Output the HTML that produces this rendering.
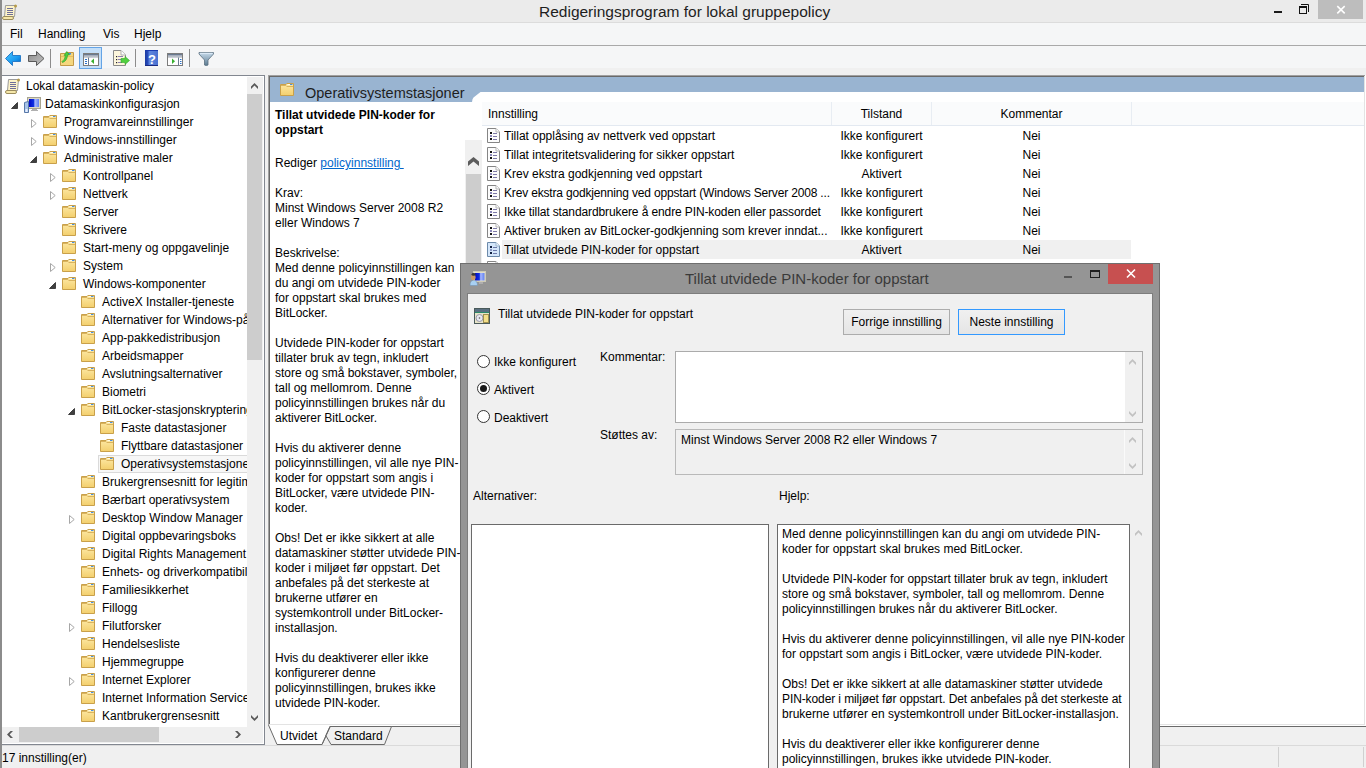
<!DOCTYPE html><html><head><meta charset="utf-8"><style>
html,body{margin:0;padding:0;width:1366px;height:768px;overflow:hidden;background:#f0f0f0;font-family:"Liberation Sans", sans-serif;font-size:12px;}
.t{position:absolute;white-space:nowrap;}
.b{position:absolute;box-sizing:border-box;}
svg.i{position:absolute;overflow:visible;}
</style></head><body>
<svg width="0" height="0" style="position:absolute">
<defs>
<linearGradient id="fg" x1="0" y1="0" x2="0" y2="1"><stop offset="0" stop-color="#fde9a6"/><stop offset="1" stop-color="#f3cf6d"/></linearGradient>
<symbol id="folder" viewBox="0 0 14 13">
<path d="M0.5 1.5 H6 L6.8 0.5 H13.5 V12.5 H0.5 Z" fill="url(#fg)" stroke="#c9a04a" stroke-width="1"/>
<path d="M7.5 1.5 H12.5" stroke="#fffbe8" stroke-width="1"/>
<rect x="10" y="1" width="2.5" height="1" fill="#4a90e0"/>
<path d="M1 2.5 H5.8 L6.8 3.5 H13" stroke="#d9b35e" stroke-width="1" fill="none"/>
</symbol>
<symbol id="scroll" viewBox="0 0 15 16">
<path d="M3.5 1.5 H13.5 L12.5 12.5 H2.5 Z" fill="#fdf3c8" stroke="#9c9c9c" stroke-width="1"/>
<path d="M5 4.5h6M5 6.5h6M5 8.5h6M5 10.5h6" stroke="#6e6e9a" stroke-width="1"/>
<rect x="0.5" y="12.5" width="11" height="3" rx="1.5" fill="#f5e7a9" stroke="#9c8c5c" stroke-width="1"/>
<circle cx="13.5" cy="2" r="1.5" fill="#b59a4a"/>
</symbol>
<symbol id="doc" viewBox="0 0 13 15">
<path d="M0.5 0.5 H9 L12.5 4 V14.5 H0.5 Z" fill="#fcfcfc" stroke="#858585" stroke-width="1"/>
<path d="M9 0.5 V4 H12.5" fill="#fff" stroke="#b5b5b5" stroke-width="1"/>
<rect x="3" y="4" width="2" height="2" fill="#111"/><rect x="3" y="7" width="2" height="2" fill="#8a86b8"/><rect x="3" y="10" width="2" height="2" fill="#111"/>
<path d="M6 5.5h4M6 8.5h4M6 11.5h4" stroke="#7c78a8" stroke-width="1"/>
</symbol>
<symbol id="docsel" viewBox="0 0 13 15">
<path d="M0.5 0.5 H9 L12.5 4 V14.5 H0.5 Z" fill="#d4e6fa" stroke="#6c8aaa" stroke-width="1"/>
<path d="M9 0.5 V4 H12.5" fill="#eef6ff" stroke="#9ab4cc" stroke-width="1"/>
<rect x="3" y="4" width="2" height="2" fill="#102040"/><rect x="3" y="7" width="2" height="2" fill="#8a96c0"/><rect x="3" y="10" width="2" height="2" fill="#102040"/>
<path d="M6 5.5h4M6 8.5h4M6 11.5h4" stroke="#6a78a8" stroke-width="1"/>
</symbol>
<symbol id="arrowc" viewBox="0 0 6 9">
<path d="M0.5 0.5 L5.2 4.5 L0.5 8.5 Z" fill="#fff" stroke="#a6a6a6" stroke-width="1"/>
</symbol>
<symbol id="arrowe" viewBox="0 0 7 7">
<path d="M6.5 0.5 V6.5 H0.5 Z" fill="#404040" stroke="#404040" stroke-width="1"/>
</symbol>
<linearGradient id="scr" x1="0" y1="0" x2="1" y2="0"><stop offset="0" stop-color="#0008c8"/><stop offset="0.45" stop-color="#1030e0"/><stop offset="0.6" stop-color="#a8b8ff"/><stop offset="1" stop-color="#6080f0"/></linearGradient>
<symbol id="computer" viewBox="0 0 17 16">
<rect x="3.5" y="0.5" width="13" height="11" fill="#dcd8c4" stroke="#a8a490"/>
<rect x="5" y="2" width="10" height="8" fill="url(#scr)"/>
<path d="M8 12.5h5M7 13.5h7" stroke="#b0b0b0"/>
<path d="M0.5 5.5 L4.5 4.5 V15.5 H0.5 Z" fill="#a8c4e8" stroke="#5878a8"/>
<rect x="1.5" y="12" width="2" height="3" fill="#e8f0ff"/>
</symbol>
<symbol id="person" viewBox="0 0 20 20">
<rect x="7.5" y="5.5" width="12" height="10" fill="#e2dfcc" stroke="#cfcbb5"/>
<rect x="9" y="7" width="9.5" height="7.5" fill="url(#scr)"/>
<rect x="13" y="16.5" width="4" height="1" fill="#c8c8c8"/>
<path d="M4 19.5 Q4 14.5 7.5 14.2 Q11.5 14.5 11.5 19.5 Z" fill="#a8d0f2" stroke="#7090b0" stroke-width="0.5"/>
<ellipse cx="7.3" cy="11.2" rx="2.3" ry="3" fill="#c99a68"/>
<ellipse cx="7.6" cy="8.4" rx="2.1" ry="1.3" fill="#3a3a3a"/>
</symbol>
</defs></svg>

<div class="b" style="left:0px;top:0px;width:2px;height:768px;background:#8c8c8c"></div>
<div class="b" style="left:2px;top:0px;width:1364px;height:22px;background:#ebebeb"></div>
<div class="b" style="left:2px;top:22px;width:1364px;height:1px;background:#dcdcdc"></div>
<svg class="i" style="left:2px;top:4px" width="15" height="16"><use href="#scroll"/></svg>
<div class="t" style="left:539px;top:1.5px;font-size:15.5px;line-height:20px;color:#1e1e1e;font-weight:normal;">Redigeringsprogram for lokal gruppepolicy</div>
<div class="b" style="left:1274px;top:11px;width:8px;height:2px;background:#1a1a1a"></div>
<svg class="i" style="left:1298px;top:3px" width="13" height="13"><path d="M3 1.5 H10.5 V9" fill="none" stroke="#141414"/><rect x="1.5" y="3.5" width="7" height="7" fill="none" stroke="#141414"/><rect x="1" y="3" width="8" height="2" fill="#141414"/></svg>
<div class="b" style="left:1318px;top:0px;width:45px;height:19px;background:#bdbdbd"></div>
<svg class="i" style="left:1336px;top:5px" width="10" height="9"><path d="M1.3 1.2 L8.7 8.3 M8.7 1.2 L1.3 8.3" stroke="#fff" stroke-width="1.6"/></svg>
<div class="b" style="left:2px;top:23px;width:1364px;height:22px;background:#f5f6f7"></div>
<div class="t" style="left:10px;top:25px;font-size:12px;line-height:18px;color:#000;font-weight:normal;">Fil</div>
<div class="t" style="left:38px;top:25px;font-size:12px;line-height:18px;color:#000;font-weight:normal;">Handling</div>
<div class="t" style="left:103px;top:25px;font-size:12px;line-height:18px;color:#000;font-weight:normal;">Vis</div>
<div class="t" style="left:134px;top:25px;font-size:12px;line-height:18px;color:#000;font-weight:normal;">Hjelp</div>
<div class="b" style="left:2px;top:45px;width:1364px;height:1px;background:#a9a9a9"></div>
<div class="b" style="left:2px;top:46px;width:1364px;height:22px;background:#f5f6f7"></div>
<div class="b" style="left:2px;top:68px;width:1364px;height:7px;background:#f0f0f0"></div>
<svg class="i" style="left:2px;top:46px" width="220" height="22">
<defs>
<linearGradient id="bluearr" x1="0" y1="0" x2="1" y2="1"><stop offset="0" stop-color="#4cc8ff"/><stop offset="0.6" stop-color="#1a9af0"/><stop offset="1" stop-color="#0060c0"/></linearGradient>
<linearGradient id="grayarr" x1="0" y1="0" x2="1" y2="1"><stop offset="0" stop-color="#8a8a8a"/><stop offset="0.5" stop-color="#a8a8a8"/><stop offset="1" stop-color="#c0c0c0"/></linearGradient>
<linearGradient id="book" x1="0" y1="0" x2="1" y2="0"><stop offset="0" stop-color="#1a3aa0"/><stop offset="0.25" stop-color="#2a50c0"/><stop offset="0.3" stop-color="#6088e0"/><stop offset="1" stop-color="#4a70d0"/></linearGradient>
<linearGradient id="funnel" x1="0" y1="0" x2="0" y2="1"><stop offset="0" stop-color="#c8dcec"/><stop offset="1" stop-color="#5a7a90"/></linearGradient>
</defs>
<!-- back arrow -->
<path d="M3.5 12.5 L10.5 5.5 V9.5 H18.5 V15.5 H10.5 V19.5 Z" fill="url(#bluearr)" stroke="#2a7cc8" stroke-width="1" stroke-linejoin="round"/>
<!-- forward arrow -->
<path d="M42 12.5 L34.5 5.5 V9.5 H26.5 V15.5 H34.5 V19.5 Z" fill="url(#grayarr)" stroke="#5a5a5a" stroke-width="1" stroke-linejoin="round"/>
<rect x="48" y="3" width="1" height="19" fill="#8c8c8c"/>
<!-- up folder -->
<path d="M58.5 7.5 H63 L64 6.5 H71.5 V19.5 H58.5 Z" fill="#f5d77e" stroke="#c49a48"/>
<path d="M59 10.5 H71" stroke="#e8c060"/>
<rect x="66" y="7" width="3" height="1.5" fill="#3c8ee8"/>
<path d="M60 15.5 Q63 14 63.5 9 L62 9.5 L64.8 5.5 L67.5 9 L65.6 9 Q65 15 60.5 16.5 Z" fill="#4cd040" stroke="#2a9a20" stroke-width="0.6"/>
<!-- highlighted button -->
<rect x="77.5" y="1.5" width="22" height="21" fill="#c4dff8" stroke="#64a4e6"/>
<rect x="81.5" y="7.5" width="15" height="12" fill="#fff" stroke="#7c7c7c"/>
<rect x="82" y="8" width="14" height="1.6" fill="#6a7a90"/>
<rect x="82" y="10.3" width="14" height="1.2" fill="#9aa2b0"/>
<rect x="86" y="11.5" width="1" height="8" fill="#6a7a90"/>
<path d="M83 13.5h2M83 15.5h2M83 17.5h2" stroke="#2a70c8"/>
<path d="M92 12.5 V18 L89 15.25 Z" fill="#38b030"/>
<!-- export list -->
<path d="M111.5 4.5 H119 L123.5 9 V19.5 H111.5 Z" fill="#fdf6dc" stroke="#8a8a8a"/>
<path d="M119 4.5 V9 H123.5" fill="#fff" stroke="#b0b0b0"/>
<rect x="114" y="10" width="1.2" height="1.2" fill="#222"/><rect x="114" y="13" width="1.2" height="1.2" fill="#222"/><rect x="114" y="16" width="1.2" height="1.2" fill="#222"/>
<path d="M116 10.5h5M116 13.5h4M116 16.5h4" stroke="#8a80b0"/>
<path d="M119 12.5 H123 V10.5 L127.5 14.5 L123 18.5 V16.5 H119 Z" fill="#50d040" stroke="#34a828" stroke-width="0.6"/>
<rect x="133" y="3" width="1" height="18" fill="#8c8c8c"/>
<!-- help book -->
<rect x="143" y="4" width="13" height="16" fill="url(#book)"/>
<rect x="143" y="4" width="13" height="1" fill="#1a3ab0"/><rect x="143" y="19" width="13" height="1" fill="#1a2a80"/>
<text x="150" y="17.5" font-family="Liberation Sans" font-size="13" font-weight="bold" fill="#fff" text-anchor="middle">?</text>
<!-- action pane window -->
<rect x="165.5" y="7.5" width="15" height="12" fill="#fff" stroke="#7c7c7c"/>
<rect x="166" y="8" width="14" height="1.6" fill="#6a7a90"/>
<rect x="166" y="10.3" width="14" height="1.2" fill="#9aa2b0"/>
<rect x="176" y="11.5" width="1" height="8" fill="#6a7a90"/>
<path d="M178 13.5h1.5M178 15.5h1.5M178 17.5h1.5" stroke="#2a70c8"/>
<path d="M170 12.5 V18 L173 15.25 Z" fill="#38b030"/>
<rect x="187" y="3" width="1" height="18" fill="#8c8c8c"/>
<!-- funnel -->
<path d="M197 6.5 H211.5 V8 L206 14 V19 Q204.2 20 202.5 19 V14 L197 8 Z" fill="url(#funnel)" stroke="#5a7080" stroke-width="0.8"/>
<path d="M198 7.3 H210.5" stroke="#e8f4ff" stroke-width="0.8"/>
</svg>
<div class="b" style="left:2px;top:75px;width:263px;height:670px;background:#fff;border:1px solid #828790;border-left:0"></div>
<div class="b" style="left:2px;top:76px;width:245px;height:650px;overflow:hidden">
<svg class="i" style="left:3px;top:2px" width="15" height="16"><use href="#scroll"/></svg>
<div class="t" style="left:24px;top:1px;font-size:12px;line-height:18px;color:#000;font-weight:normal;">Lokal datamaskin-policy</div>
<svg class="i" style="left:22px;top:21px" width="17" height="16"><use href="#computer"/></svg>
<svg class="i" style="left:9px;top:26px" width="7" height="7"><use href="#arrowe"/></svg>
<div class="t" style="left:43px;top:19px;font-size:12px;line-height:18px;color:#000;font-weight:normal;">Datamaskinkonfigurasjon</div>
<svg class="i" style="left:41px;top:39px" width="14" height="13"><use href="#folder"/></svg>
<svg class="i" style="left:29px;top:43px" width="6" height="9"><use href="#arrowc"/></svg>
<div class="t" style="left:62px;top:37px;font-size:12px;line-height:18px;color:#000;font-weight:normal;">Programvareinnstillinger</div>
<svg class="i" style="left:41px;top:57px" width="14" height="13"><use href="#folder"/></svg>
<svg class="i" style="left:29px;top:61px" width="6" height="9"><use href="#arrowc"/></svg>
<div class="t" style="left:62px;top:55px;font-size:12px;line-height:18px;color:#000;font-weight:normal;">Windows-innstillinger</div>
<svg class="i" style="left:41px;top:75px" width="14" height="13"><use href="#folder"/></svg>
<svg class="i" style="left:28px;top:80px" width="7" height="7"><use href="#arrowe"/></svg>
<div class="t" style="left:62px;top:73px;font-size:12px;line-height:18px;color:#000;font-weight:normal;">Administrative maler</div>
<svg class="i" style="left:60px;top:93px" width="14" height="13"><use href="#folder"/></svg>
<svg class="i" style="left:48px;top:97px" width="6" height="9"><use href="#arrowc"/></svg>
<div class="t" style="left:81px;top:91px;font-size:12px;line-height:18px;color:#000;font-weight:normal;">Kontrollpanel</div>
<svg class="i" style="left:60px;top:111px" width="14" height="13"><use href="#folder"/></svg>
<svg class="i" style="left:48px;top:115px" width="6" height="9"><use href="#arrowc"/></svg>
<div class="t" style="left:81px;top:109px;font-size:12px;line-height:18px;color:#000;font-weight:normal;">Nettverk</div>
<svg class="i" style="left:60px;top:129px" width="14" height="13"><use href="#folder"/></svg>
<div class="t" style="left:81px;top:127px;font-size:12px;line-height:18px;color:#000;font-weight:normal;">Server</div>
<svg class="i" style="left:60px;top:147px" width="14" height="13"><use href="#folder"/></svg>
<div class="t" style="left:81px;top:145px;font-size:12px;line-height:18px;color:#000;font-weight:normal;">Skrivere</div>
<svg class="i" style="left:60px;top:165px" width="14" height="13"><use href="#folder"/></svg>
<div class="t" style="left:81px;top:163px;font-size:12px;line-height:18px;color:#000;font-weight:normal;">Start-meny og oppgavelinje</div>
<svg class="i" style="left:60px;top:183px" width="14" height="13"><use href="#folder"/></svg>
<svg class="i" style="left:48px;top:187px" width="6" height="9"><use href="#arrowc"/></svg>
<div class="t" style="left:81px;top:181px;font-size:12px;line-height:18px;color:#000;font-weight:normal;">System</div>
<svg class="i" style="left:60px;top:201px" width="14" height="13"><use href="#folder"/></svg>
<svg class="i" style="left:47px;top:206px" width="7" height="7"><use href="#arrowe"/></svg>
<div class="t" style="left:81px;top:199px;font-size:12px;line-height:18px;color:#000;font-weight:normal;">Windows-komponenter</div>
<svg class="i" style="left:79px;top:219px" width="14" height="13"><use href="#folder"/></svg>
<div class="t" style="left:100px;top:217px;font-size:12px;line-height:18px;color:#000;font-weight:normal;">ActiveX Installer-tjeneste</div>
<svg class="i" style="left:79px;top:237px" width="14" height="13"><use href="#folder"/></svg>
<div class="t" style="left:100px;top:235px;font-size:12px;line-height:18px;color:#000;font-weight:normal;">Alternativer for Windows-pålogging</div>
<svg class="i" style="left:79px;top:255px" width="14" height="13"><use href="#folder"/></svg>
<div class="t" style="left:100px;top:253px;font-size:12px;line-height:18px;color:#000;font-weight:normal;">App-pakkedistribusjon</div>
<svg class="i" style="left:79px;top:273px" width="14" height="13"><use href="#folder"/></svg>
<div class="t" style="left:100px;top:271px;font-size:12px;line-height:18px;color:#000;font-weight:normal;">Arbeidsmapper</div>
<svg class="i" style="left:79px;top:291px" width="14" height="13"><use href="#folder"/></svg>
<div class="t" style="left:100px;top:289px;font-size:12px;line-height:18px;color:#000;font-weight:normal;">Avslutningsalternativer</div>
<svg class="i" style="left:79px;top:309px" width="14" height="13"><use href="#folder"/></svg>
<div class="t" style="left:100px;top:307px;font-size:12px;line-height:18px;color:#000;font-weight:normal;">Biometri</div>
<svg class="i" style="left:79px;top:327px" width="14" height="13"><use href="#folder"/></svg>
<svg class="i" style="left:66px;top:332px" width="7" height="7"><use href="#arrowe"/></svg>
<div class="t" style="left:100px;top:325px;font-size:12px;line-height:18px;color:#000;font-weight:normal;">BitLocker-stasjonskryptering</div>
<svg class="i" style="left:98px;top:345px" width="14" height="13"><use href="#folder"/></svg>
<div class="t" style="left:119px;top:343px;font-size:12px;line-height:18px;color:#000;font-weight:normal;">Faste datastasjoner</div>
<svg class="i" style="left:98px;top:363px" width="14" height="13"><use href="#folder"/></svg>
<div class="t" style="left:119px;top:361px;font-size:12px;line-height:18px;color:#000;font-weight:normal;">Flyttbare datastasjoner</div>
<div class="b" style="left:96px;top:379px;width:169px;height:18px;border:1px solid #dadada;background:#f7f7f7"></div>
<svg class="i" style="left:98px;top:381px" width="14" height="13"><use href="#folder"/></svg>
<div class="t" style="left:119px;top:379px;font-size:12px;line-height:18px;color:#000;font-weight:normal;">Operativsystemstasjoner</div>
<svg class="i" style="left:79px;top:399px" width="14" height="13"><use href="#folder"/></svg>
<div class="t" style="left:100px;top:397px;font-size:12px;line-height:18px;color:#000;font-weight:normal;">Brukergrensesnitt for legitimasjon</div>
<svg class="i" style="left:79px;top:417px" width="14" height="13"><use href="#folder"/></svg>
<div class="t" style="left:100px;top:415px;font-size:12px;line-height:18px;color:#000;font-weight:normal;">Bærbart operativsystem</div>
<svg class="i" style="left:79px;top:435px" width="14" height="13"><use href="#folder"/></svg>
<svg class="i" style="left:67px;top:439px" width="6" height="9"><use href="#arrowc"/></svg>
<div class="t" style="left:100px;top:433px;font-size:12px;line-height:18px;color:#000;font-weight:normal;">Desktop Window Manager</div>
<svg class="i" style="left:79px;top:453px" width="14" height="13"><use href="#folder"/></svg>
<div class="t" style="left:100px;top:451px;font-size:12px;line-height:18px;color:#000;font-weight:normal;">Digital oppbevaringsboks</div>
<svg class="i" style="left:79px;top:471px" width="14" height="13"><use href="#folder"/></svg>
<div class="t" style="left:100px;top:469px;font-size:12px;line-height:18px;color:#000;font-weight:normal;">Digital Rights Management</div>
<svg class="i" style="left:79px;top:489px" width="14" height="13"><use href="#folder"/></svg>
<div class="t" style="left:100px;top:487px;font-size:12px;line-height:18px;color:#000;font-weight:normal;">Enhets- og driverkompatibilitet</div>
<svg class="i" style="left:79px;top:507px" width="14" height="13"><use href="#folder"/></svg>
<div class="t" style="left:100px;top:505px;font-size:12px;line-height:18px;color:#000;font-weight:normal;">Familiesikkerhet</div>
<svg class="i" style="left:79px;top:525px" width="14" height="13"><use href="#folder"/></svg>
<div class="t" style="left:100px;top:523px;font-size:12px;line-height:18px;color:#000;font-weight:normal;">Fillogg</div>
<svg class="i" style="left:79px;top:543px" width="14" height="13"><use href="#folder"/></svg>
<svg class="i" style="left:67px;top:547px" width="6" height="9"><use href="#arrowc"/></svg>
<div class="t" style="left:100px;top:541px;font-size:12px;line-height:18px;color:#000;font-weight:normal;">Filutforsker</div>
<svg class="i" style="left:79px;top:561px" width="14" height="13"><use href="#folder"/></svg>
<div class="t" style="left:100px;top:559px;font-size:12px;line-height:18px;color:#000;font-weight:normal;">Hendelsesliste</div>
<svg class="i" style="left:79px;top:579px" width="14" height="13"><use href="#folder"/></svg>
<div class="t" style="left:100px;top:577px;font-size:12px;line-height:18px;color:#000;font-weight:normal;">Hjemmegruppe</div>
<svg class="i" style="left:79px;top:597px" width="14" height="13"><use href="#folder"/></svg>
<svg class="i" style="left:67px;top:601px" width="6" height="9"><use href="#arrowc"/></svg>
<div class="t" style="left:100px;top:595px;font-size:12px;line-height:18px;color:#000;font-weight:normal;">Internet Explorer</div>
<svg class="i" style="left:79px;top:615px" width="14" height="13"><use href="#folder"/></svg>
<div class="t" style="left:100px;top:613px;font-size:12px;line-height:18px;color:#000;font-weight:normal;">Internet Information Services</div>
<svg class="i" style="left:79px;top:633px" width="14" height="13"><use href="#folder"/></svg>
<div class="t" style="left:100px;top:631px;font-size:12px;line-height:18px;color:#000;font-weight:normal;">Kantbrukergrensesnitt</div>
</div>
<div class="b" style="left:247px;top:77px;width:16px;height:650px;background:#f0f0f0"></div>
<div class="b" style="left:247px;top:94px;width:15px;height:266px;background:#cdcdcd"></div>
<svg class="i" style="left:251px;top:82px" width="7" height="7"><path d="M0 4.5 L3.5 1 L7 4.5 V7 L3.5 3.6 L0 7 Z" fill="#5a5a5a"/></svg>
<svg class="i" style="left:251px;top:714px" width="7" height="7"><path d="M0 1 L3.5 4.4 L7 1 V3.5 L3.5 7 L0 3.5 Z" fill="#5a5a5a"/></svg>
<div class="b" style="left:2px;top:727px;width:245px;height:16px;background:#f0f0f0"></div>
<div class="b" style="left:19px;top:727px;width:140px;height:15px;background:#cdcdcd"></div>
<svg class="i" style="left:7px;top:731px" width="6" height="7"><path d="M6 0 L2.6 3.5 L6 7 H3.5 L0 3.5 L3.5 0 Z" fill="#5a5a5a"/></svg>
<svg class="i" style="left:235px;top:731px" width="6" height="7"><path d="M0 0 L3.4 3.5 L0 7 H2.5 L6 3.5 L2.5 0 Z" fill="#5a5a5a"/></svg>
<div class="b" style="left:247px;top:727px;width:16px;height:16px;background:#f0f0f0"></div>
<div class="b" style="left:268px;top:75px;width:1098px;height:651px;background:#fff"></div>
<div class="b" style="left:268px;top:75px;width:1097px;height:650px;background:#a0a0a0"></div>
<div class="b" style="left:269px;top:76px;width:1096px;height:649px;background:#e3e3e3"></div>
<div class="b" style="left:269px;top:76px;width:1095px;height:648px;background:#696969"></div>
<div class="b" style="left:270px;top:77px;width:1094px;height:647px;background:#fff"></div>
<div class="b" style="left:270px;top:77px;width:1094px;height:15px;background:#99b4d1"></div>
<svg class="i" style="left:270px;top:77px" width="220" height="25"><path d="M0 0 H220 V15 H482 Z" fill="none"/><path d="M0 0 H220 V15 H210.5 L203.5 20.5 Q202.3 21.5 202 25 H0 Z" fill="#99b4d1"/></svg>
<svg class="i" style="left:280px;top:83px" width="14" height="13"><use href="#folder"/></svg>
<div class="t" style="left:305px;top:83px;font-size:14.5px;line-height:20px;color:#1e1e1e;font-weight:normal;">Operativsystemstasjoner</div>
<div class="t" style="left:275px;top:108px;font-size:12px;line-height:15px;color:#000;font-weight:normal;"><b>Tillat utvidede PIN-koder for<br>oppstart</b></div>
<div class="t" style="left:275px;top:156px;font-size:12px;line-height:15px;color:#000;font-weight:normal;">Rediger <span style="color:#0066cc;text-decoration:underline">policyinnstilling&nbsp;</span></div>
<div class="t" style="left:275px;top:186px;font-size:12px;line-height:15px;color:#000;font-weight:normal;">Krav:<br>Minst Windows Server 2008 R2<br>eller Windows 7<br><br>Beskrivelse:<br>Med denne policyinnstillingen kan<br>du angi om utvidede PIN-koder<br>for oppstart skal brukes med<br>BitLocker.<br><br>Utvidede PIN-koder for oppstart<br>tillater bruk av tegn, inkludert<br>store og små bokstaver, symboler,<br>tall og mellomrom. Denne<br>policyinnstillingen brukes når du<br>aktiverer BitLocker.<br><br>Hvis du aktiverer denne<br>policyinnstillingen, vil alle nye PIN-<br>koder for oppstart som angis i<br>BitLocker, være utvidede PIN-<br>koder.<br><br>Obs! Det er ikke sikkert at alle<br>datamaskiner støtter utvidede PIN-<br>koder i miljøet før oppstart. Det<br>anbefales på det sterkeste at<br>brukerne utfører en<br>systemkontroll under BitLocker-<br>installasjon.<br><br>Hvis du deaktiverer eller ikke<br>konfigurerer denne<br>policyinnstillingen, brukes ikke<br>utvidede PIN-koder.</div>
<div class="b" style="left:465px;top:140px;width:17px;height:585px;background:#f0f0f0"></div>
<div class="b" style="left:466px;top:174px;width:15px;height:120px;background:#cdcdcd"></div>
<svg class="i" style="left:468px;top:156px" width="11" height="11"><path d="M0 5.5 L5.5 1 L11 5.5 V10 L5.5 5.5 L0 10 Z" fill="#5c5c5c"/></svg>
<div class="b" style="left:482px;top:102px;width:882px;height:24px;background:#fafbfc;border-bottom:1px solid #e3e9f1"></div>
<div class="b" style="left:831px;top:102px;width:1px;height:23px;background:#e8edf3"></div>
<div class="b" style="left:931px;top:102px;width:1px;height:23px;background:#e8edf3"></div>
<div class="b" style="left:1131px;top:102px;width:1px;height:23px;background:#e8edf3"></div>
<div class="t" style="left:488px;top:105px;font-size:12px;line-height:18px;color:#000;font-weight:normal;">Innstilling</div>
<div class="t" style="left:832px;top:105px;font-size:12px;line-height:18px;color:#000;font-weight:normal;"><div style="width:99px;text-align:center">Tilstand</div></div>
<div class="t" style="left:932px;top:105px;font-size:12px;line-height:18px;color:#000;font-weight:normal;"><div style="width:199px;text-align:center">Kommentar</div></div>
<svg class="i" style="left:487px;top:128px" width="13" height="15"><use href="#doc"/></svg>
<div class="t" style="left:504px;top:127px;font-size:12px;line-height:19px;color:#000;font-weight:normal;width:327px;overflow:hidden;letter-spacing:0px">Tillat opplåsing av nettverk ved oppstart</div>
<div class="t" style="left:832px;top:127px;font-size:12px;line-height:19px;color:#000;font-weight:normal;"><div style="width:99px;text-align:center">Ikke konfigurert</div></div>
<div class="t" style="left:932px;top:127px;font-size:12px;line-height:19px;color:#000;font-weight:normal;"><div style="width:199px;text-align:center">Nei</div></div>
<svg class="i" style="left:487px;top:147px" width="13" height="15"><use href="#doc"/></svg>
<div class="t" style="left:504px;top:146px;font-size:12px;line-height:19px;color:#000;font-weight:normal;width:327px;overflow:hidden;letter-spacing:0px">Tillat integritetsvalidering for sikker oppstart</div>
<div class="t" style="left:832px;top:146px;font-size:12px;line-height:19px;color:#000;font-weight:normal;"><div style="width:99px;text-align:center">Ikke konfigurert</div></div>
<div class="t" style="left:932px;top:146px;font-size:12px;line-height:19px;color:#000;font-weight:normal;"><div style="width:199px;text-align:center">Nei</div></div>
<svg class="i" style="left:487px;top:166px" width="13" height="15"><use href="#doc"/></svg>
<div class="t" style="left:504px;top:165px;font-size:12px;line-height:19px;color:#000;font-weight:normal;width:327px;overflow:hidden;letter-spacing:0px">Krev ekstra godkjenning ved oppstart</div>
<div class="t" style="left:832px;top:165px;font-size:12px;line-height:19px;color:#000;font-weight:normal;"><div style="width:99px;text-align:center">Aktivert</div></div>
<div class="t" style="left:932px;top:165px;font-size:12px;line-height:19px;color:#000;font-weight:normal;"><div style="width:199px;text-align:center">Nei</div></div>
<svg class="i" style="left:487px;top:185px" width="13" height="15"><use href="#doc"/></svg>
<div class="t" style="left:504px;top:184px;font-size:12px;line-height:19px;color:#000;font-weight:normal;width:327px;overflow:hidden;letter-spacing:-0.17px">Krev ekstra godkjenning ved oppstart (Windows Server 2008 ...</div>
<div class="t" style="left:832px;top:184px;font-size:12px;line-height:19px;color:#000;font-weight:normal;"><div style="width:99px;text-align:center">Ikke konfigurert</div></div>
<div class="t" style="left:932px;top:184px;font-size:12px;line-height:19px;color:#000;font-weight:normal;"><div style="width:199px;text-align:center">Nei</div></div>
<svg class="i" style="left:487px;top:204px" width="13" height="15"><use href="#doc"/></svg>
<div class="t" style="left:504px;top:203px;font-size:12px;line-height:19px;color:#000;font-weight:normal;width:327px;overflow:hidden;letter-spacing:-0.11px">Ikke tillat standardbrukere å endre PIN-koden eller passordet</div>
<div class="t" style="left:832px;top:203px;font-size:12px;line-height:19px;color:#000;font-weight:normal;"><div style="width:99px;text-align:center">Ikke konfigurert</div></div>
<div class="t" style="left:932px;top:203px;font-size:12px;line-height:19px;color:#000;font-weight:normal;"><div style="width:199px;text-align:center">Nei</div></div>
<svg class="i" style="left:487px;top:223px" width="13" height="15"><use href="#doc"/></svg>
<div class="t" style="left:504px;top:222px;font-size:12px;line-height:19px;color:#000;font-weight:normal;width:327px;overflow:hidden;letter-spacing:0px">Aktiver bruken av BitLocker-godkjenning som krever inndat...</div>
<div class="t" style="left:832px;top:222px;font-size:12px;line-height:19px;color:#000;font-weight:normal;"><div style="width:99px;text-align:center">Ikke konfigurert</div></div>
<div class="t" style="left:932px;top:222px;font-size:12px;line-height:19px;color:#000;font-weight:normal;"><div style="width:199px;text-align:center">Nei</div></div>
<div class="b" style="left:502px;top:240px;width:629px;height:19px;background:#f0f0f0"></div>
<svg class="i" style="left:487px;top:242px" width="13" height="15"><use href="#docsel"/></svg>
<div class="t" style="left:504px;top:241px;font-size:12px;line-height:19px;color:#000;font-weight:normal;width:327px;overflow:hidden;letter-spacing:0px">Tillat utvidede PIN-koder for oppstart</div>
<div class="t" style="left:832px;top:241px;font-size:12px;line-height:19px;color:#000;font-weight:normal;"><div style="width:99px;text-align:center">Aktivert</div></div>
<div class="t" style="left:932px;top:241px;font-size:12px;line-height:19px;color:#000;font-weight:normal;"><div style="width:199px;text-align:center">Nei</div></div>
<svg class="i" style="left:487px;top:261px" width="13" height="15"><use href="#doc"/></svg>
<div class="t" style="left:504px;top:260px;font-size:12px;line-height:19px;color:#000;font-weight:normal;width:327px;overflow:hidden;letter-spacing:0px">Tillat sikker oppstart for integritetsvalidering</div>
<div class="t" style="left:832px;top:260px;font-size:12px;line-height:19px;color:#000;font-weight:normal;"><div style="width:99px;text-align:center">Ikke konfigurert</div></div>
<div class="t" style="left:932px;top:260px;font-size:12px;line-height:19px;color:#000;font-weight:normal;"><div style="width:199px;text-align:center">Nei</div></div>
<div class="b" style="left:268px;top:726px;width:1098px;height:19px;background:#f0f0f0"></div>
<div class="b" style="left:330px;top:726px;width:1036px;height:1px;background:#6a6a6a"></div>
<svg class="i" style="left:262px;top:716px" width="140" height="30"><path d="M6.5 9 L15 28.5 H60 L68.5 10 Z" fill="#fff"/><path d="M6.5 9 L15 28.5 H60 L68.5 10" fill="none" stroke="#6a6a6a"/><path d="M68 10.5 H129.5 L122.5 28.5 H69 L63.8 19.5 Z" fill="#f0f0f0" stroke="#6a6a6a"/><path d="M60 28.5 L68.5 10" fill="none" stroke="#6a6a6a"/></svg>
<div class="t" style="left:280px;top:727px;font-size:12px;line-height:18px;color:#000;font-weight:normal;">Utvidet</div>
<div class="t" style="left:334px;top:727px;font-size:12px;line-height:18px;color:#000;font-weight:normal;">Standard</div>
<div class="b" style="left:2px;top:745px;width:1364px;height:1px;background:#dadada"></div>
<div class="t" style="left:2px;top:749px;font-size:12px;line-height:18px;color:#000;font-weight:normal;">17 innstilling(er)</div>
<div class="b" style="left:1278px;top:747px;width:1px;height:20px;background:#d0d0d0"></div>
<div class="b" style="left:1363px;top:747px;width:1px;height:20px;background:#d0d0d0"></div>
<div class="b" style="left:460px;top:263px;width:700px;height:505px;background:#959595;border:1px solid #6f6f6f;border-bottom:0"></div>
<svg class="i" style="left:466px;top:266px" width="20" height="20"><use href="#person"/></svg>
<div class="t" style="left:685px;top:269px;font-size:15px;line-height:20px;color:#3a3a3a;font-weight:normal;">Tillat utvidede PIN-koder for oppstart</div>
<div class="b" style="left:1064px;top:276px;width:8px;height:2px;background:#555"></div>
<div class="b" style="left:1090px;top:270px;width:10px;height:8px;border:1px solid #1e1e1e;border-top-width:2px"></div>
<div class="b" style="left:1108px;top:264px;width:45px;height:20px;background:#c75050"></div>
<svg class="i" style="left:1126px;top:269px" width="10" height="9"><path d="M1 0.5 L9 8.5 M9 0.5 L1 8.5" stroke="#fff" stroke-width="1.6"/></svg>
<div class="b" style="left:467px;top:293px;width:686px;height:475px;background:#f0f0f0;border:1px solid #7d7d7d;border-bottom:0"></div>
<svg class="i" style="left:474px;top:308px" width="16" height="16"><rect x="0.5" y="0.5" width="15" height="15" fill="#e8e4c8" stroke="#4a5a5a"/><rect x="1" y="1" width="14" height="3" fill="#5a6f80"/><rect x="1" y="4" width="14" height="1" fill="#2a8a6a"/><circle cx="5.5" cy="10" r="3.5" fill="#e8e8f0" stroke="#9a9aaa"/><circle cx="5.5" cy="10" r="0.8" fill="#555"/><rect x="9.5" y="6.5" width="5" height="8" fill="#f4e08a" stroke="#a09050"/></svg>
<div class="t" style="left:498px;top:305px;font-size:12px;line-height:18px;color:#000;font-weight:normal;">Tillat utvidede PIN-koder for oppstart</div>
<div class="b" style="left:843px;top:309px;width:107px;height:26px;background:linear-gradient(#f0f0f0,#e5e5e5);border:1px solid #acacac"></div>
<div class="t" style="left:843px;top:313px;font-size:12px;line-height:18px;color:#000;font-weight:normal;"><div style="width:107px;text-align:center">Forrige innstilling</div></div>
<div class="b" style="left:958px;top:309px;width:107px;height:26px;background:linear-gradient(#f0f0f0,#e5e5e5);border:1px solid #3399ff"></div>
<div class="t" style="left:958px;top:313px;font-size:12px;line-height:18px;color:#000;font-weight:normal;"><div style="width:107px;text-align:center">Neste innstilling</div></div>
<svg class="i" style="left:477px;top:355px" width="13" height="13"><circle cx="6.5" cy="6.5" r="6" fill="#fff" stroke="#333" stroke-width="1"/></svg>
<div class="t" style="left:494px;top:353px;font-size:12px;line-height:18px;color:#000;font-weight:normal;">Ikke konfigurert</div>
<svg class="i" style="left:477px;top:382px" width="13" height="13"><circle cx="6.5" cy="6.5" r="6" fill="#fff" stroke="#333" stroke-width="1"/><circle cx="6.5" cy="6.5" r="3.5" fill="#1a1a1a"/></svg>
<div class="t" style="left:494px;top:381px;font-size:12px;line-height:18px;color:#000;font-weight:normal;">Aktivert</div>
<svg class="i" style="left:477px;top:410px" width="13" height="13"><circle cx="6.5" cy="6.5" r="6" fill="#fff" stroke="#333" stroke-width="1"/></svg>
<div class="t" style="left:494px;top:409px;font-size:12px;line-height:18px;color:#000;font-weight:normal;">Deaktivert</div>
<div class="t" style="left:600px;top:348px;font-size:12px;line-height:18px;color:#000;font-weight:normal;">Kommentar:</div>
<div class="t" style="left:600px;top:426px;font-size:12px;line-height:18px;color:#000;font-weight:normal;">Støttes av:</div>
<div class="b" style="left:675px;top:351px;width:468px;height:72px;background:#fff;border:1px solid #ababab"></div>
<div class="b" style="left:1125px;top:352px;width:17px;height:70px;background:#f0f0f0"></div>
<div class="b" style="left:675px;top:429px;width:468px;height:46px;background:#f0f0f0;border:1px solid #b9b9b9"></div>
<div class="b" style="left:1124px;top:430px;width:1px;height:44px;background:#fafafa"></div>
<svg class="i" style="left:1129px;top:358px" width="7" height="7"><path d="M0 4.5 L3.5 1 L7 4.5 V7 L3.5 3.6 L0 7 Z" fill="#c2c2c2"/></svg>
<svg class="i" style="left:1129px;top:410px" width="7" height="7"><path d="M0 1 L3.5 4.4 L7 1 V3.5 L3.5 7 L0 3.5 Z" fill="#c2c2c2"/></svg>
<svg class="i" style="left:1129px;top:436px" width="7" height="7"><path d="M0 4.5 L3.5 1 L7 4.5 V7 L3.5 3.6 L0 7 Z" fill="#c2c2c2"/></svg>
<svg class="i" style="left:1129px;top:462px" width="7" height="7"><path d="M0 1 L3.5 4.4 L7 1 V3.5 L3.5 7 L0 3.5 Z" fill="#c2c2c2"/></svg>
<svg class="i" style="left:1135px;top:529px" width="7" height="7"><path d="M0 4.5 L3.5 1 L7 4.5 V7 L3.5 3.6 L0 7 Z" fill="#c2c2c2"/></svg>
<div class="t" style="left:681px;top:431px;font-size:12px;line-height:18px;color:#000;font-weight:normal;">Minst Windows Server 2008 R2 eller Windows 7</div>
<div class="t" style="left:473px;top:487px;font-size:12px;line-height:18px;color:#000;font-weight:normal;">Alternativer:</div>
<div class="t" style="left:779px;top:487px;font-size:12px;line-height:18px;color:#000;font-weight:normal;">Hjelp:</div>
<div class="b" style="left:471px;top:524px;width:298px;height:260px;background:#fff;border:1px solid #6a6a6a"></div>
<div class="b" style="left:777px;top:524px;width:353px;height:260px;background:#fff;border:1px solid #6a6a6a"></div>
<div class="t" style="left:782px;top:527px;font-size:12px;line-height:15px;color:#000;font-weight:normal;">Med denne policyinnstillingen kan du angi om utvidede PIN-<br>koder for oppstart skal brukes med BitLocker.<br><br>Utvidede PIN-koder for oppstart tillater bruk av tegn, inkludert<br>store og små bokstaver, symboler, tall og mellomrom. Denne<br>policyinnstillingen brukes når du aktiverer BitLocker.<br><br>Hvis du aktiverer denne policyinnstillingen, vil alle nye PIN-koder<br>for oppstart som angis i BitLocker, være utvidede PIN-koder.<br><br>Obs! Det er ikke sikkert at alle datamaskiner støtter utvidede<br><span style="letter-spacing:-0.1px">PIN-koder i miljøet før oppstart. Det anbefales på det sterkeste at</span><br>brukerne utfører en systemkontroll under BitLocker-installasjon.<br><br>Hvis du deaktiverer eller ikke konfigurerer denne<br>policyinnstillingen, brukes ikke utvidede PIN-koder.</div>
</body></html>
